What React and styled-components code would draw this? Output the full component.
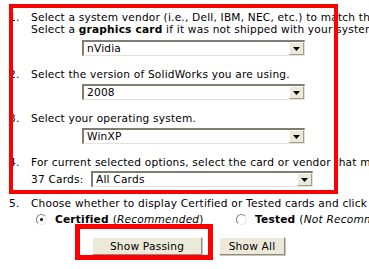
import React from "react";
import styled, { createGlobalStyle } from "styled-components";

const GlobalStyle = createGlobalStyle`
  html, body {
    margin: 0;
    padding: 0;
    background: #fff;
    overflow: hidden;
  }
`;

const Page = styled.div`
  position: relative;
  width: 369px;
  height: 269px;
  overflow: hidden;
  padding: 11px 0 0 9px;
  box-sizing: border-box;
  font-family: "DejaVu Sans", Verdana, sans-serif;
  font-size: 10.6px;
  letter-spacing: 0.2px;
  line-height: 12px;
  color: #000;
  white-space: nowrap;
`;

const Step = styled.div`
  display: flex;
  margin-bottom: ${(p) => p.$gap ?? 12}px;
`;

const Num = styled.div`
  width: 22px;
  flex: none;
`;

const StepBody = styled.div`
  display: flex;
  flex-direction: column;
`;

const Line = styled.div`
  height: 12px;
`;

const Row = styled.div`
  display: flex;
  align-items: center;
  margin-top: ${(p) => p.$top ?? 4}px;
`;

const SelectBox = styled.div`
  display: flex;
  align-items: stretch;
  box-sizing: border-box;
  width: ${(p) => p.$width || 223}px;
  height: 16px;
  margin-left: ${(p) => p.$indent ?? 51}px;
  border-style: solid;
  border-width: 2px 1px 1px 2px;
  border-color: #7f7d70 #e4e2d8 #e4e2d8 #7f7d70;
  background: #fff;
`;

const SelectText = styled.span`
  flex: 1;
  padding-left: 3px;
  line-height: 13px;
`;

const ArrowButton = styled.span`
  width: 15px;
  box-sizing: border-box;
  display: flex;
  align-items: center;
  justify-content: center;
  background: #ece9d8;
  border-style: solid;
  border-width: 1px;
  border-color: #fff #a09e8f #a09e8f #fff;
`;

const Arrow = () => (
  <svg width="7" height="4" viewBox="0 0 7 4">
    <path d="M0 0h7L3.5 4z" fill="#000" />
  </svg>
);

const Select = ({ value, width, indent }) => (
  <SelectBox $width={width} $indent={indent}>
    <SelectText>{value}</SelectText>
    <ArrowButton>
      <Arrow />
    </ArrowButton>
  </SelectBox>
);

const Label = styled.span`
  width: 60px;
`;

const RadioRow = styled.div`
  display: flex;
  align-items: center;
  margin: 4px 0 0 5px;
  height: 12px;
`;

const RadioItem = styled.label`
  display: flex;
  align-items: center;
  flex: none;
  width: ${(p) => p.$width}px;
`;

const Radio = styled.span`
  position: relative;
  flex: none;
  width: 11px;
  height: 11px;
  box-sizing: border-box;
  border-radius: 50%;
  border: 1px solid;
  border-color: #808080 #e8e8e8 #e8e8e8 #808080;
  background: #fff;
  margin-right: 8px;

  &::after {
    content: "";
    display: ${(p) => (p.$checked ? "block" : "none")};
    position: absolute;
    left: 3px;
    top: 3px;
    width: 3px;
    height: 3px;
    border-radius: 50%;
    background: #000;
  }
`;

const Strong = styled.b`
  font-weight: bold;
  margin-right: 4px;
`;

const ButtonRow = styled.div`
  display: flex;
  gap: 17px;
  margin: 12px 0 0 83px;
`;

const Button = styled.div`
  box-sizing: border-box;
  width: ${(p) => p.$width}px;
  height: 18px;
  display: flex;
  align-items: center;
  justify-content: center;
  background: #ece9d8;
  border: 1px solid;
  border-color: #fff #8e8c80 #8e8c80 #fff;
  box-shadow: 1px 1px 0 #c8c6ba;
`;

const Highlight = styled.div`
  position: absolute;
  left: ${(p) => p.$x}px;
  top: ${(p) => p.$y}px;
  width: ${(p) => p.$w}px;
  height: ${(p) => p.$h}px;
  box-sizing: border-box;
  border: ${(p) => p.$b}px solid #f00;
  pointer-events: none;
`;

export default function App() {
  return (
    <>
      <GlobalStyle />
      <Page>
        <Step>
          <Num>1.</Num>
          <StepBody>
            <Line>Select a system vendor (i.e., Dell, IBM, NEC, etc.) to match the</Line>
            <Line>
              Select a <b>graphics card</b> if it was not shipped with your system
            </Line>
            <Row $top={5}>
              <Select value="nVidia" />
            </Row>
          </StepBody>
        </Step>
        <Step>
          <Num>2.</Num>
          <StepBody>
            <Line>Select the version of SolidWorks you are using.</Line>
            <Row>
              <Select value="2008" />
            </Row>
          </StepBody>
        </Step>
        <Step>
          <Num>3.</Num>
          <StepBody>
            <Line>Select your operating system.</Line>
            <Row>
              <Select value="WinXP" />
            </Row>
          </StepBody>
        </Step>
        <Step $gap={10}>
          <Num>4.</Num>
          <StepBody>
            <Line>For current selected options, select the card or vendor that most</Line>
            <Row $top={3}>
              <Label>37 Cards:</Label>
              <Select value="All Cards" indent={0} width={222} />
            </Row>
          </StepBody>
        </Step>
        <Step>
          <Num>5.</Num>
          <StepBody>
            <Line>Choose whether to display Certified or Tested cards and click</Line>
            <RadioRow>
              <RadioItem $width={200}>
                <Radio $checked />
                <Strong>Certified</Strong>
                <span>
                  (<i>Recommended</i>)
                </span>
              </RadioItem>
              <RadioItem $width={160}>
                <Radio />
                <Strong>Tested</Strong>
                <span>
                  (<i>Not Recommended</i>)
                </span>
              </RadioItem>
            </RadioRow>
          </StepBody>
        </Step>
        <ButtonRow>
          <Button $width={110}>Show Passing</Button>
          <Button $width={66}>Show All</Button>
        </ButtonRow>
        <Highlight $x={9} $y={4} $w={329} $h={190} $b={4} />
        <Highlight $x={75} $y={224} $w={138} $h={36} $b={5} />
      </Page>
    </>
  );
}
